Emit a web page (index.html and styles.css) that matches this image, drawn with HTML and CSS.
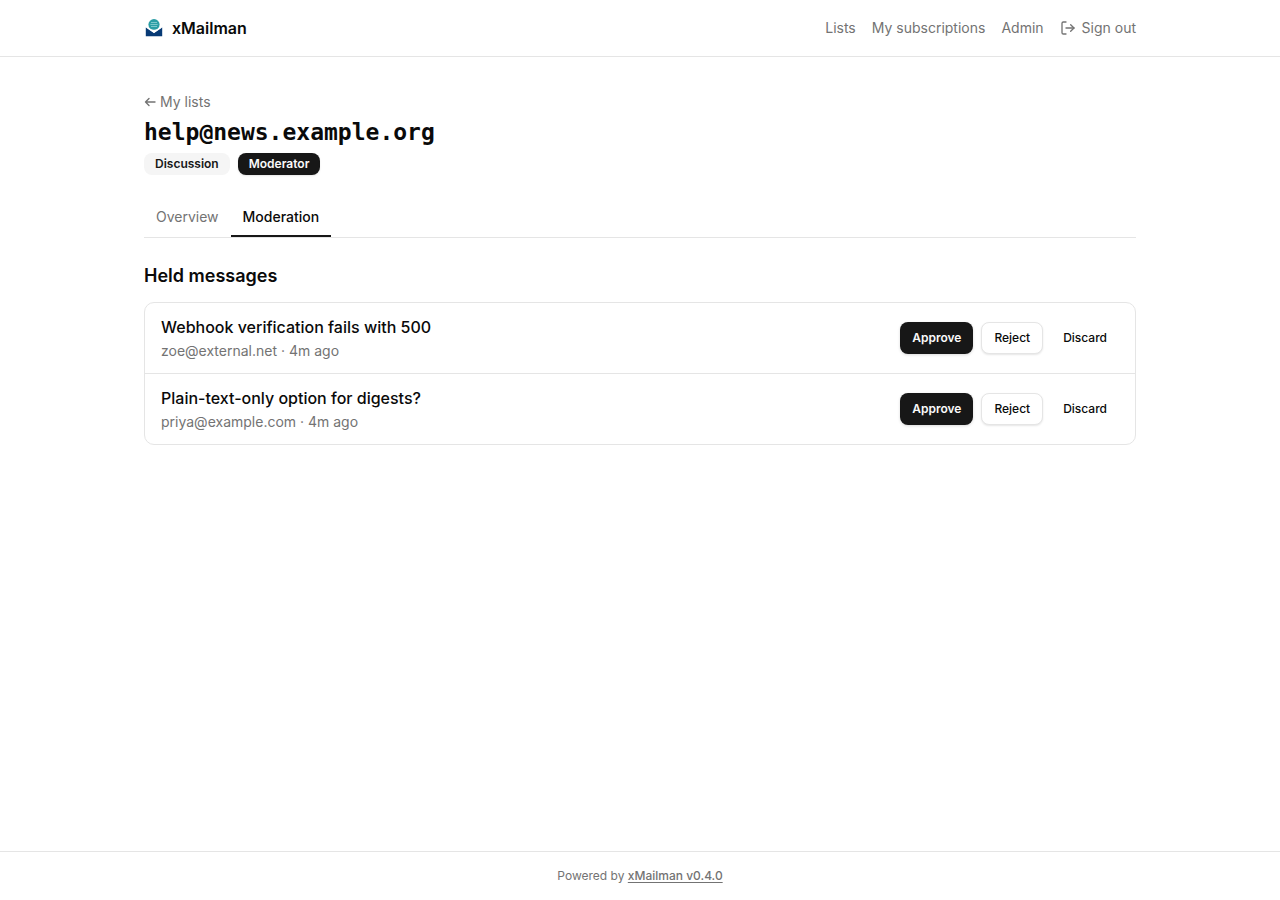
FILE: index.html
```html
<!DOCTYPE html>
<html lang="en">
<head>
    <meta charset="UTF-8">
    <meta name="viewport" content="width=device-width, initial-scale=1.0">
    <title>help@news.example.org - xMailman</title>
    <link rel="stylesheet" href="styles.css">
</head>
<body>

    <header class="site-header">
        <div class="container header-inner">
            <a class="brand" href="#">
                <svg class="brand-logo" viewBox="0 0 20 20" aria-hidden="true">
                    <circle cx="10" cy="6.6" r="5.6" fill="#2a9da5"/>
                    <path d="M7 4.5h6M6.4 6.5h7.2M7 8.5h6" stroke="#8fd0d3" stroke-width="0.8" fill="none"/>
                    <path d="M1.8 9.4 10 15l8.2-5.6v8.9H1.8z" fill="#073a75"/>
                    <path d="M2.8 10 10 14.9l7.2-4.9-2.6.2Q10 13.4 5.4 10.2z" fill="#fff"/>
                </svg>
                <span>xMailman</span>
            </a>
            <nav class="nav">
                <a href="#">Lists</a>
                <a href="#">My subscriptions</a>
                <a href="#">Admin</a>
                <button class="sign-out" type="button">
                    <svg class="icon" viewBox="0 0 24 24" aria-hidden="true">
                        <path d="M9 21H5a2 2 0 0 1-2-2V5a2 2 0 0 1 2-2h4"/>
                        <path d="m16 17 5-5-5-5"/>
                        <path d="M21 12H9"/>
                    </svg>
                    Sign out
                </button>
            </nav>
        </div>
    </header>

    <main class="container main">
        <div class="list-head">
            <a class="back" href="#">
                <svg class="back-icon" viewBox="0 0 12 12" aria-hidden="true">
                    <path d="M11 6H1.5M5 2.5 1.5 6 5 9.5"/>
                </svg>
                My lists
            </a>
            <h1>help@news.example.org</h1>
            <div class="badges">
                <span class="badge">Discussion</span>
                <span class="badge badge-dark">Moderator</span>
            </div>
        </div>

        <nav class="tabs">
            <a class="tab" href="#">Overview</a>
            <a class="tab active" href="#" aria-current="page">Moderation</a>
        </nav>

        <section>
            <h2>Held messages</h2>
            <ul class="messages">
                <li class="message">
                    <div class="message-text">
                        <p class="subject">Webhook verification fails with 500</p>
                        <p class="meta">zoe@external.net · 4m ago</p>
                    </div>
                    <div class="actions">
                        <button class="btn btn-primary" type="button">Approve</button>
                        <button class="btn btn-outline" type="button">Reject</button>
                        <button class="btn" type="button">Discard</button>
                    </div>
                </li>
                <li class="message">
                    <div class="message-text">
                        <p class="subject">Plain-text-only option for digests?</p>
                        <p class="meta">priya@example.com · 4m ago</p>
                    </div>
                    <div class="actions">
                        <button class="btn btn-primary" type="button">Approve</button>
                        <button class="btn btn-outline" type="button">Reject</button>
                        <button class="btn" type="button">Discard</button>
                    </div>
                </li>
            </ul>
        </section>
    </main>

    <footer class="site-footer">
        Powered by <a href="#">xMailman v0.4.0</a>
    </footer>

</body>
</html>
```
FILE: styles.css
```css
* {
    box-sizing: border-box;
}

body {
    display: flex;
    flex-direction: column;
    min-height: 100vh;
    margin: 0;
    font-family: Inter, "Liberation Sans", sans-serif;
    font-size: 14px;
    line-height: 20px;
    color: #0a0a0a;
    background-color: #fff;
}

h1, h2, p, ul {
    margin: 0;
    padding: 0;
}

a {
    color: inherit;
    text-decoration: none;
}

button {
    font-family: inherit;
    color: inherit;
    background: none;
    border: none;
    cursor: pointer;
}

.container {
    width: 100%;
    max-width: 1024px;
    margin: 0 auto;
    padding: 0 16px;
}

/* Header */
.site-header {
    border-bottom: 1px solid #e5e5e5;
}

.header-inner {
    display: flex;
    justify-content: space-between;
    align-items: center;
    height: 56px;
}

.brand {
    display: flex;
    align-items: center;
    gap: 8px;
    font-size: 16px;
    line-height: 24px;
    font-weight: 600;
}

.brand-logo {
    width: 20px;
    height: 20px;
}

.nav {
    display: flex;
    align-items: center;
    gap: 16px;
    color: #737373;
}

.sign-out {
    display: flex;
    align-items: center;
    gap: 6px;
    padding: 0;
    font-size: 14px;
    line-height: 20px;
}

.icon {
    width: 16px;
    height: 16px;
}

.icon, .back-icon {
    fill: none;
    stroke: currentColor;
    stroke-width: 2;
    stroke-linecap: round;
    stroke-linejoin: round;
}

/* Page */
.main {
    flex: 1;
    display: flex;
    flex-direction: column;
    gap: 24px;
    padding-top: 35px;
    padding-bottom: 32px;
}

.list-head {
    display: flex;
    flex-direction: column;
    align-items: flex-start;
    gap: 4px;
}

.back {
    display: flex;
    align-items: center;
    gap: 4px;
    color: #737373;
}

.back-icon {
    width: 12px;
    height: 12px;
    stroke-width: 1.4;
}

h1 {
    font-family: "DejaVu Sans Mono", monospace;
    font-size: 23px;
    line-height: 33px;
    font-weight: 700;
}

.badges {
    display: flex;
    gap: 8px;
}

.badge {
    padding: 2px 10px;
    border: 1px solid transparent;
    border-radius: 8px;
    font-size: 12px;
    line-height: 16px;
    font-weight: 600;
    background-color: #f5f5f5;
    color: #171717;
}

.badge-dark {
    background-color: #171717;
    color: #fafafa;
    box-shadow: 0 1px 2px rgba(0, 0, 0, 0.1);
}

.tabs {
    display: flex;
    border-bottom: 1px solid #e5e5e5;
}

.tab {
    padding: 8px 12px;
    border-bottom: 2px solid transparent;
    color: #737373;
}

.tab.active {
    border-bottom-color: #171717;
    color: #0a0a0a;
    font-weight: 500;
}

h2 {
    margin-bottom: 12px;
    font-size: 18px;
    line-height: 28px;
    font-weight: 600;
}

/* Held messages */
.messages {
    list-style: none;
    border: 1px solid #e5e5e5;
    border-radius: 10px;
}

.message {
    display: flex;
    justify-content: space-between;
    align-items: center;
    gap: 16px;
    padding: 12px 16px;
}

.message + .message {
    border-top: 1px solid #e5e5e5;
}

.message-text {
    display: flex;
    flex-direction: column;
    gap: 2px;
}

.subject {
    font-size: 16px;
    line-height: 24px;
    font-weight: 500;
}

.meta {
    color: #737373;
}

.actions {
    display: flex;
    gap: 8px;
}

.btn {
    height: 32px;
    padding: 0 12px;
    border-radius: 8px;
    font-size: 12px;
    line-height: 16px;
    font-weight: 500;
}

.btn-primary {
    background-color: #171717;
    color: #fafafa;
    font-weight: 600;
    box-shadow: 0 1px 3px rgba(0, 0, 0, 0.15);
}

.btn-outline {
    border: 1px solid #e5e5e5;
    background-color: #fff;
    box-shadow: 0 1px 2px rgba(0, 0, 0, 0.1);
}

/* Footer */
.site-footer {
    padding: 16px;
    border-top: 1px solid #e5e5e5;
    font-size: 12px;
    line-height: 16px;
    text-align: center;
    color: #737373;
}

.site-footer a {
    font-weight: 500;
    text-decoration: underline;
    text-underline-offset: 2px;
}
```
